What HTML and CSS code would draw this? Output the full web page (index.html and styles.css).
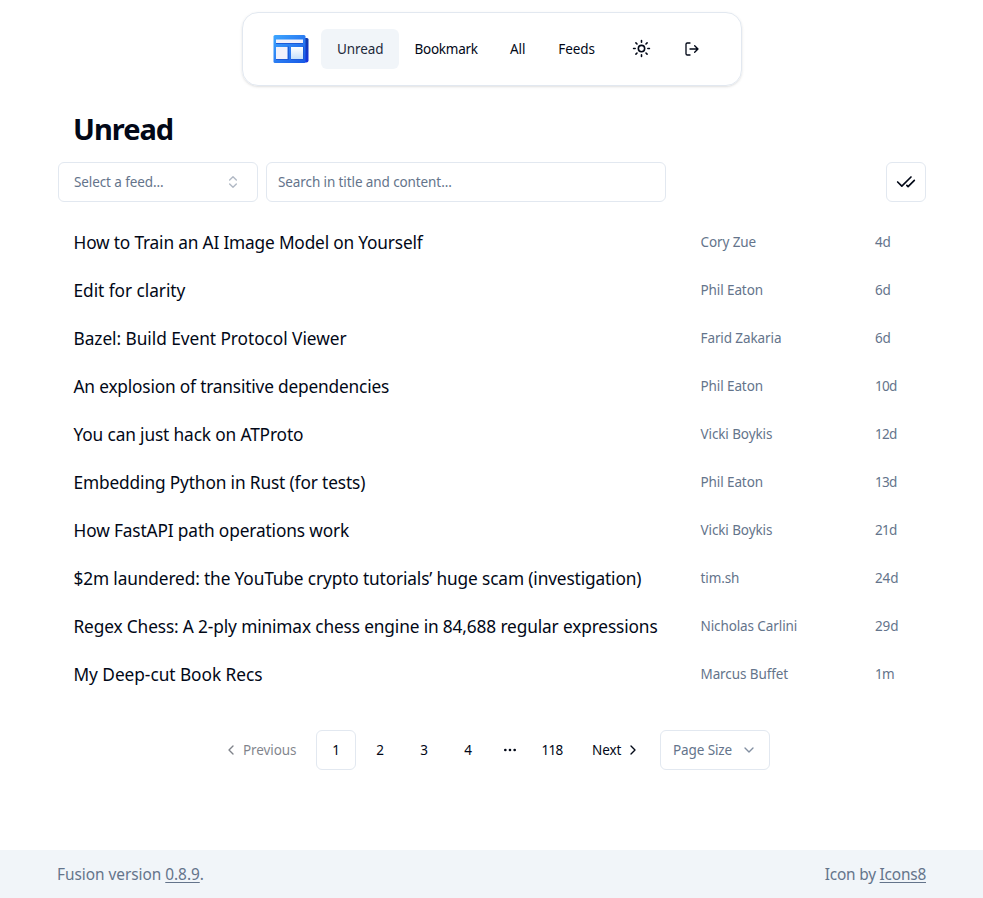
FILE: index.html
```html
<!DOCTYPE html>
<html lang="en">
<head>
<meta charset="utf-8">
<title>Unread</title>
<link rel="stylesheet" href="styles.css">
</head>
<body>
<nav class="nav">
  <svg class="logo" viewBox="0 0 36 30">
    <defs>
      <linearGradient id="face" x1="0" y1="0" x2="1" y2="1"><stop offset="0" stop-color="#3da7ff"/><stop offset=".5" stop-color="#2b7df2"/><stop offset="1" stop-color="#1758e5"/></linearGradient>
      <linearGradient id="side" x1="0" y1="0" x2="0" y2="1"><stop offset="0" stop-color="#123caa"/><stop offset="1" stop-color="#1635e0"/></linearGradient>
      <linearGradient id="panel" x1="0" y1="0" x2="0" y2="1"><stop offset="0" stop-color="#fff"/><stop offset="1" stop-color="#c5e0fb"/></linearGradient>
    </defs>
    <path fill="url(#side)" d="M4 4h30q1.500 0 1.500 1.500v21q0 2-2 2H4z"/>
    <rect x=".5" y="1" width="32" height="28" rx="1.500" fill="url(#face)"/>
    <path fill="#1c5ad8" d="M3 9h27v1H3zm11.500 3.500h1.500V26H3v-1h11.500zm15 0H31V26H18v-1h11.500z"/>
    <path fill="#f1f1fb" d="M3 5.500h27V9H3zM3 13h11.500v12H3z"/>
    <path fill="url(#panel)" d="M18 13h12v12H18z"/>
  </svg>
  <a class="tab active">Unread</a>
  <a class="tab bookmark">Bookmark</a>
  <a class="tab">All</a>
  <a class="tab feeds">Feeds</a>
  <span class="tool theme"><svg class="icon i18" viewBox="0 0 24 24"><circle cx="12" cy="12" r="4"/><path d="M12 2v2m0 16v2M4.930 4.930l1.410 1.410m11.320 11.320 1.410 1.410M2 12h2m16 0h2M6.340 17.660l-1.410 1.410M19.070 4.930l-1.410 1.410"/></svg></span>
  <span class="tool"><svg class="icon i16" viewBox="0 0 24 24"><path d="M9 21H5a2 2 0 0 1-2-2V5a2 2 0 0 1 2-2h4m7 14 5-5-5-5m5 5H9"/></svg></span>
</nav>
<main class="container">
  <h1>Unread</h1>
  <div class="filters">
    <div class="box feed"><span>Select a feed...</span><svg class="icon i16 dim" viewBox="0 0 24 24"><path d="m7 15 5 5 5-5M7 9l5-5 5 5"/></svg></div>
    <div class="box search"><span>Search in title and content...</span></div>
    <div class="box check"><svg class="icon i20" viewBox="0 0 24 24"><path d="M18 6 7 17l-5-5m20-2-7.500 7.500L13 16"/></svg></div>
  </div>
  <div class="list">
    <div class="row"><span class="title tight">How to Train an AI Image Model on Yourself</span><span>Cory Zue</span><span>4d</span></div>
    <div class="row"><span class="title loose">Edit for clarity</span><span>Phil Eaton</span><span>6d</span></div>
    <div class="row"><span class="title loose">Bazel: Build Event Protocol Viewer</span><span>Farid Zakaria</span><span>6d</span></div>
    <div class="row"><span class="title tight">An explosion of transitive dependencies</span><span>Phil Eaton</span><span class="narrow">10d</span></div>
    <div class="row"><span class="title">You can just hack on ATProto</span><span>Vicki Boykis</span><span class="narrow">12d</span></div>
    <div class="row"><span class="title">Embedding Python in Rust (for tests)</span><span>Phil Eaton</span><span class="narrow">13d</span></div>
    <div class="row"><span class="title">How FastAPI path operations work</span><span>Vicki Boykis</span><span class="narrow">21d</span></div>
    <div class="row"><span class="title">$2m laundered: the YouTube crypto tutorials’ huge scam (investigation)</span><span>tim.sh</span><span>24d</span></div>
    <div class="row"><span class="title">Regex Chess: A 2-ply minimax chess engine in 84,688 regular expressions</span><span>Nicholas Carlini</span><span>29d</span></div>
    <div class="row"><span class="title loose">My Deep-cut Book Recs</span><span>Marcus Buffet</span><span class="narrow">1m</span></div>
  </div>
  <div class="pager">
    <span class="prev"><svg class="icon i16" viewBox="0 0 24 24"><path d="m15 18-6-6 6-6"/></svg>Previous</span>
    <span class="page box">1</span>
    <span class="page">2</span>
    <span class="page">3</span>
    <span class="page">4</span>
    <span class="page more"><svg class="icon i16" viewBox="0 0 24 24"><circle cx="12" cy="12" r="1"/><circle cx="19" cy="12" r="1"/><circle cx="5" cy="12" r="1"/></svg></span>
    <span class="page last">118</span>
    <span class="next">Next<svg class="icon i16" viewBox="0 0 24 24"><path d="m9 18 6-6-6-6"/></svg></span>
    <span class="box size"><span>Page Size</span><svg class="icon i16 chevron" viewBox="0 0 24 24"><path d="m6 9 6 6 6-6"/></svg></span>
  </div>
</main>
<footer class="footer">
  <span>Fusion version <a>0.8.9</a>.</span>
  <span class="credit">Icon by <a>Icons8</a></span>
</footer>
</body>
</html>
```
FILE: styles.css
```css
* { box-sizing: border-box; }
body {
  margin: 0;
  min-height: 898px;
  display: flex;
  flex-direction: column;
  background: #fff;
  color: #020817;
  font: 13.5px/20px "Noto Sans", sans-serif;
  letter-spacing: -0.1px;
  white-space: nowrap;
}
.icon { flex: none; fill: none; stroke: currentColor; stroke-width: 2; stroke-linecap: round; stroke-linejoin: round; }
.i16 { width: 16px; height: 16px; }
.i18 { width: 19px; height: 19px; }
.i20 { width: 20px; height: 20px; }
.nav {
  width: 500px;
  height: 74px;
  margin: 12px 0 0 242px;
  padding-left: 30px;
  display: flex;
  align-items: center;
  border: 1px solid #e2e8f0;
  border-radius: 16px;
  box-shadow: 0 1px 3px rgba(0, 0, 0, .1), 0 1px 2px -1px rgba(0, 0, 0, .1);
}
.logo { width: 36px; height: 30px; margin-right: 12px; }
.tab { height: 40px; padding: 10px 16px; border-radius: 6px; }
.active { width: 78px; background: #f1f5f9; color: #1e293b; }
.bookmark { width: 95px; padding-left: 15.5px; letter-spacing: -0.25px; }
.feeds { padding-left: 17px; }
.tool { width: 40px; display: flex; justify-content: center; }
.tool:last-child { margin-right: 29px; }
.theme { margin: 0 11px 1px auto; }
.container { width: 868px; margin-left: 58px; }
h1 { margin: 25px 0 15px 15px; font-size: 29px; line-height: 36px; font-weight: 700; letter-spacing: -1px; }
.filters { display: flex; gap: 8px; color: #64748b; }
.box { height: 40px; display: flex; align-items: center; border: 1px solid #e2e8f0; border-radius: 6px; }
.feed { width: 200px; padding: 0 16px 0 15px; justify-content: space-between; }
.dim { opacity: .5; }
.search { width: 400px; padding-left: 11px; }
.check { width: 40px; margin-left: auto; justify-content: center; color: #020817; }
.list { margin-top: 16px; }
.row { height: 48px; padding-left: 15.5px; display: grid; grid-template-columns: 627px 174.5px 1fr; align-items: center; color: #64748b; }
.title { padding-top: 2px; color: #020817; font-size: 17.3px; line-height: 28px; letter-spacing: -0.14px; }
.tight { letter-spacing: -0.18px; }
.loose { letter-spacing: -0.05px; }
.narrow { letter-spacing: -0.7px; }
.pager { display: flex; margin: 32px 0 0 162px; gap: 4px; align-items: center; }
.prev { width: 92px; height: 40px; padding-left: 3px; display: flex; align-items: center; gap: 4px; opacity: .5; }
.page { width: 40px; height: 40px; display: flex; align-items: center; justify-content: center; }
.more { width: 36px; }
.last { letter-spacing: -0.8px; }
.next { width: 76px; padding-left: 16px; display: flex; align-items: center; gap: 4px; }
.size { width: 110px; margin-left: 4px; padding: 0 12px; justify-content: space-between; color: #64748b; }
.chevron { opacity: .8; }
.footer { height: 48px; margin-top: auto; padding: 2px 57px 0; display: flex; align-items: center; justify-content: space-between; background: #f1f5f9; color: #64748b; font-size: 15.4px; line-height: 24px; letter-spacing: -0.03px; }
.credit { letter-spacing: -0.2px; }
.footer a { text-decoration: underline; text-decoration-thickness: 1px; text-underline-offset: 2px; }
```
